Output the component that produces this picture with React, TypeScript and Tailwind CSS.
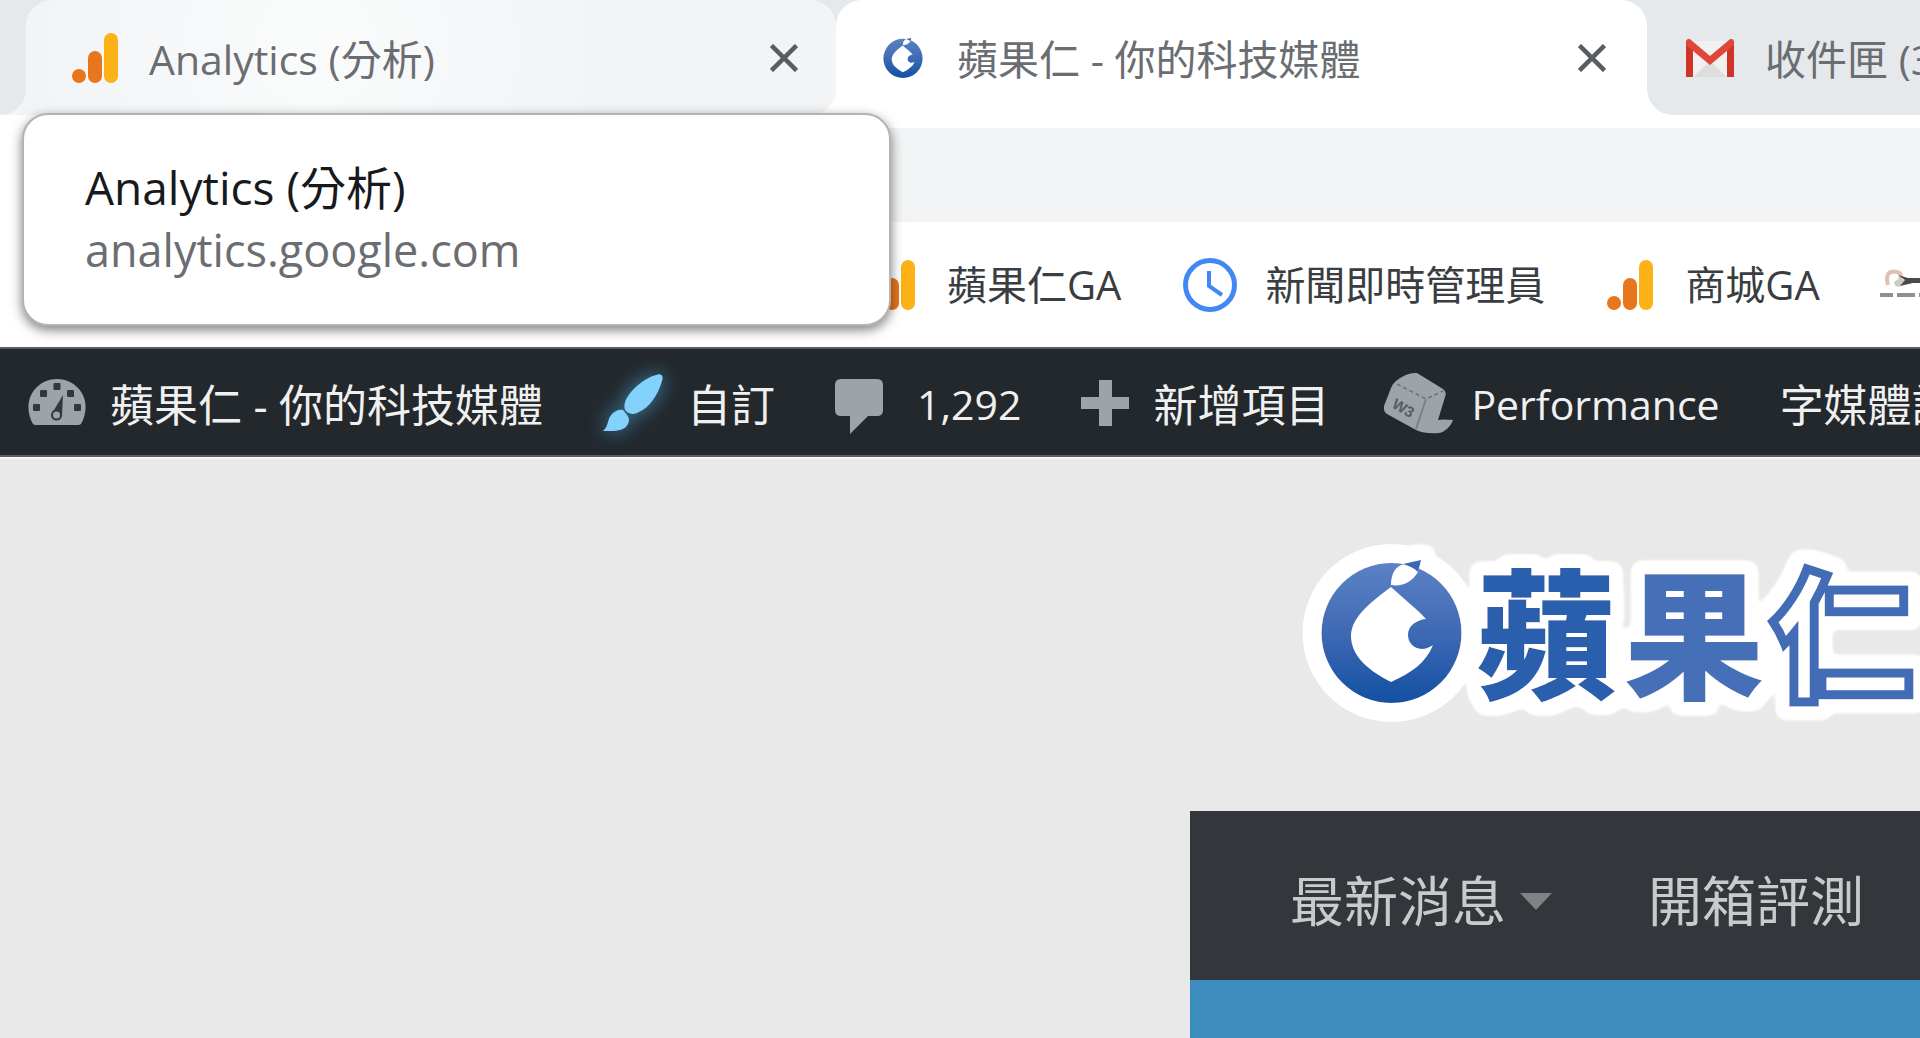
import React from 'react';

function AnalyticsIcon() {
  return (
    <svg className="h-[50px] w-[46px] shrink-0" viewBox="0 0 46 50" aria-hidden="true">
      <circle cx="7" cy="43" r="7" fill="#e8761c" />
      <rect x="16" y="18" width="14" height="32" rx="7" fill="#e8761c" />
      <rect x="32" y="0" width="14" height="50" rx="7" fill="#fcb116" />
    </svg>
  );
}

function CloseButton({ label }: { label: string }) {
  return (
    <button type="button" aria-label={label} className="shrink-0">
      <svg className="h-[28px] w-[28px]" viewBox="0 0 28 28" fill="none" stroke="#5a5d60" strokeWidth="4.5" aria-hidden="true">
        <path d="M1.5 1.5 26.5 26.5M26.5 1.5 1.5 26.5" />
      </svg>
    </button>
  );
}

function SeedMark() {
  return (
    <>
      <circle cx="101.5" cy="103" r="70" fill="url(#seed)" />
      <path
        d="M101 57C114 69 126 78 136 89C126 90 118 96 118 105C118 116 130 124 143 115C136 133 121 143 101 152C81 142 61 127 61 106C61 86 85 69 101 57Z"
        fill="#fff"
      />
      <path d="M101 55C101 43 106 36 114 34L132 28L128 42C122 52 112 57 101 55Z" fill="#fff" />
      <path d="M113 34L131 30L128 42C124 38 119 36 113 34Z" fill="#3a68b4" />
    </>
  );
}

function SeedIcon() {
  return (
    <svg className="h-[40px] w-[40px] shrink-0" viewBox="30 30 143 143" aria-hidden="true">
      <defs>
        <linearGradient id="seed" x1="0" y1="0" x2="0" y2="1">
          <stop offset="0" stopColor="#5b82c6" />
          <stop offset="0.5" stopColor="#3f69b3" />
          <stop offset="1" stopColor="#1250a3" />
        </linearGradient>
      </defs>
      <SeedMark />
    </svg>
  );
}

function GmailIcon() {
  return (
    <svg className="h-[38px] w-[48px] shrink-0" viewBox="0 0 48 38" aria-hidden="true">
      <path d="M4 2h40v36H4z" fill="#f1f1f1" />
      <path d="M7 38 24 22 41 38z" fill="#dedede" />
      <path d="M0 3 7 7v31H0zM48 3 41 7v31h7z" fill="#cf3429" />
      <path d="M0 3C0 0 3-1 5 1L24 17 43 1c2-2 5-1 5 2V6L24 26 0 6z" fill="#e0463a" />
    </svg>
  );
}

function ClockIcon() {
  return (
    <svg className="h-[54px] w-[54px] shrink-0" viewBox="0 0 54 54" fill="none" stroke="#4288f5" strokeWidth="5" aria-hidden="true">
      <circle cx="27" cy="27" r="24.5" />
      <path d="M26 13v15l13 9" strokeWidth="4" />
    </svg>
  );
}

function BirdIcon() {
  return (
    <svg className="h-[54px] w-[54px] shrink-0" viewBox="0 0 54 54" aria-hidden="true">
      <path d="M8 27C5 17 9 12 17 14C22 15 21 19 20 22" fill="none" stroke="#dfbfb2" strokeWidth="4" />
      <path d="M14 24C21 18 29 22 22 27C19 30 14 29 14 24Z" fill="#c9cccb" />
      <path d="M18 17 28 20 54 20V25H33L20 28L25 22Z" fill="#4a4a4a" />
      <path d="M0 37h54" stroke="#8f8f8f" strokeWidth="4" strokeDasharray="13 4 18 4" />
    </svg>
  );
}

function GaugeIcon() {
  return (
    <svg className="h-[48px] w-[58px] shrink-0" viewBox="0 0 58 48" aria-hidden="true">
      <path d="M5 45C-2 33-1 18 8 9C19-3 39-3 50 9C59 18 60 33 53 45Q52 46 50 46H8Q6 46 5 45Z" fill="#9ea3a8" />
      <g fill="#33383d">
        <rect x="5" y="25" width="7" height="7" rx="1" />
        <rect x="12" y="11" width="7" height="7" rx="1" />
        <rect x="25.500" y="4" width="7" height="7" rx="1" />
        <rect x="39" y="11" width="7" height="7" rx="1" />
        <rect x="46" y="25" width="7" height="7" rx="1" />
        <path d="M35 16 34 37C33 43 24 43 23 37C23 34 24 32 26 31Z" />
      </g>
      <circle cx="28.500" cy="36" r="3.500" fill="#9ea3a8" />
    </svg>
  );
}

function BrushIcon() {
  return (
    <svg
      className="h-[58px] w-[60px] shrink-0 overflow-visible drop-shadow-[0_0_10px_#3f86ad]"
      viewBox="0 0 60 58"
      fill="#82d2fc"
      aria-hidden="true"
    >
      <path d="M53 1C58-1 61 2 59 7C55 21 46 34 36 38C31 41 27 40 24 38C21 36 21 32 22 28C26 17 41 4 53 1Z" />
      <path d="M20 36C24 41 28 44 25 50C22 56 15 57 8 57H0C6 52 4 45 9 40C12 37 16 35 20 36Z" />
    </svg>
  );
}

function CommentIcon() {
  return (
    <svg className="mt-[6px] h-[55px] w-[48px] shrink-0" viewBox="0 0 48 55" fill="#9ea3a8" aria-hidden="true">
      <path d="M6 0H42Q48 0 48 6V31Q48 37 42 37H33L15 55V37H6Q0 37 0 31V6Q0 0 6 0Z" />
    </svg>
  );
}

function PlusIcon() {
  return (
    <svg className="h-[46px] w-[48px] shrink-0" viewBox="0 0 48 46" fill="#9ea3a8" aria-hidden="true">
      <path d="M18 0H31V17H48V29H31V46H18V29H0V17H18Z" />
    </svg>
  );
}

function CubeIcon() {
  return (
    <svg className="h-[62px] w-[70px] shrink-0" viewBox="0 0 70 62" aria-hidden="true">
      <path
        d="M13 9Q24 0 34 1L60 17Q64 20 62 25L55 48Q60 47 70 48C68 54 62 60 56 61Q42 62 33 58L4 42Q0 39 1 34L8 16Q9 12 13 9Z"
        fill="#9ea3a8"
      />
      <path d="M14 12 43 27 60 19" fill="none" stroke="#6b7176" strokeWidth="1.500" strokeDasharray="4 3" />
      <path d="M43 27 33 57" fill="none" stroke="#7b8186" strokeWidth="2" />
      <text
        transform="translate(8 35) rotate(30)"
        fontFamily="Liberation Sans, sans-serif"
        fontSize="15"
        fontWeight="700"
        fill="#575d62"
      >
        W3
      </text>
    </svg>
  );
}

function SiteLogo() {
  return (
    <svg className="h-[200px] w-[650px] shrink-0" viewBox="0 0 650 200" role="img" aria-label="蘋果仁">
      <defs>
        <filter id="halo" x="-5%" y="-20%" width="110%" height="140%">
          <feMorphology in="SourceAlpha" operator="dilate" radius="9" result="wide" />
          <feGaussianBlur in="wide" stdDeviation="5" result="soft" />
          <feComponentTransfer in="soft" result="edge">
            <feFuncR type="linear" slope="0" intercept="1" />
            <feFuncG type="linear" slope="0" intercept="1" />
            <feFuncB type="linear" slope="0" intercept="1" />
            <feFuncA type="linear" slope="7" intercept="-0.5" />
          </feComponentTransfer>
          <feMerge>
            <feMergeNode in="edge" />
            <feMergeNode in="SourceGraphic" />
          </feMerge>
        </filter>
      </defs>
      <circle cx="101.5" cy="103" r="89" fill="#fff" />
      <g filter="url(#halo)">
        <SeedMark />
        <g fontFamily="'Noto Sans CJK TC', sans-serif" fontSize="140" fontWeight="900">
          <text x="186" y="158" fill="#2b5eae">
            蘋
          </text>
          <text x="334" y="158" fill="#4470b8">
            果
          </text>
          <text x="482" y="158" fill="#fff" stroke="#426db6" strokeWidth="9">
            仁
          </text>
        </g>
      </g>
    </svg>
  );
}

function TabStrip() {
  return (
    <div className="flex h-[115px] bg-[#e5e9ec]">
      <div className="w-[26px] shrink-0 bg-[#f3f4f6]">
        <div className="h-full rounded-br-[26px] bg-[#e5e9ec]" />
      </div>
      <div className="w-[810px] shrink-0 bg-[linear-gradient(#e5e9ec_50%,#ffffff_50%)]">
        <div className="flex h-full items-center rounded-[26px] rounded-bl-none bg-[#f3f4f6] bg-[radial-gradient(circle_at_290px_50px,#fafbfb,#f3f4f6_280px)] pr-[38px] pl-[46px]">
          <AnalyticsIcon />
          <span className="ml-[31px] flex-1 truncate pt-[4px] text-[41px] text-[#6a6d71]">Analytics (分析)</span>
          <CloseButton label="關閉 Analytics" />
        </div>
      </div>
      <div className="flex w-[811px] shrink-0 items-center rounded-t-[26px] bg-white pr-[41px] pl-[47px]">
        <SeedIcon />
        <span className="ml-[34px] flex-1 truncate pt-[4px] text-[41px] text-[#6a6d71]">蘋果仁 - 你的科技媒體</span>
        <CloseButton label="關閉蘋果仁" />
      </div>
      <div className="min-w-0 flex-1 bg-white">
        <div className="flex h-full items-center overflow-hidden rounded-bl-[26px] bg-[#e5e9ec] pl-[39px]">
          <GmailIcon />
          <span className="ml-[31px] pt-[4px] text-[41px] whitespace-nowrap text-[#6a6d71]">收件匣 (3)</span>
        </div>
      </div>
    </div>
  );
}

function HoverCard() {
  return (
    <div
      role="tooltip"
      className="absolute top-[113px] left-[22px] h-[213px] w-[869px] rounded-[26px] border-2 border-[#b4b4b4] bg-white px-[61px] pt-[39px] shadow-[0_4px_12px_rgba(0,0,0,0.5)]"
    >
      <p className="text-[46px] leading-[66px] text-[#17191c]">Analytics (分析)</p>
      <p className="text-[45px] leading-[60px] text-[#6a6d71]">analytics.google.com</p>
    </div>
  );
}

function Bookmarks() {
  return (
    <nav
      aria-label="書籤"
      className="flex h-[125px] items-center overflow-hidden bg-white pl-[869px] text-[40px] whitespace-nowrap text-[#3a3d41]"
    >
      <a href="#apple-ga" className="flex items-center gap-[32px]">
        <AnalyticsIcon />
        蘋果仁GA
      </a>
      <a href="#news" className="ml-[62px] flex items-center gap-[28px]">
        <ClockIcon />
        新聞即時管理員
      </a>
      <a href="#shop-ga" className="ml-[62px] flex items-center gap-[32px]">
        <AnalyticsIcon />
        商城GA
      </a>
      <a href="#bird" aria-label="書籤" className="ml-[60px]">
        <BirdIcon />
      </a>
    </nav>
  );
}

function AdminBar() {
  return (
    <nav
      aria-label="管理列"
      className="flex h-[110px] items-center overflow-hidden border-y-2 border-[#5b5f63] bg-[#23282d] pt-[2px] pl-[28px] text-[44px] whitespace-nowrap text-[#f0f0f0]"
    >
      <a href="#site" className="flex items-center gap-[24px]">
        <GaugeIcon />
        <span className="pt-[4px]">蘋果仁 - 你的科技媒體</span>
      </a>
      <a href="#customize" className="ml-[60px] flex items-center gap-[24px]">
        <BrushIcon />
        <span className="pt-[4px]">自訂</span>
      </a>
      <a href="#comments" className="ml-[60px] flex items-center gap-[34px]">
        <CommentIcon />
        <span className="pt-[4px] text-[41px] font-medium">1,292</span>
      </a>
      <a href="#new" className="ml-[60px] flex items-center gap-[24px]">
        <PlusIcon />
        <span className="pt-[4px]">新增項目</span>
      </a>
      <a href="#performance" className="ml-[54px] flex items-center gap-[18px]">
        <CubeIcon />
        <span className="pt-[4px] text-[41px] font-medium">Performance</span>
      </a>
      <a href="#media" className="ml-[60px] pt-[4px]">
        字媒體設定
      </a>
    </nav>
  );
}

function SiteNav() {
  return (
    <nav
      aria-label="主選單"
      className="flex h-[169px] items-center gap-[96px] overflow-hidden bg-[#33363b] pt-[12px] pl-[100px] text-[54px] whitespace-nowrap text-[#c9cacc]"
    >
      <a href="#latest" className="flex items-center gap-[14px]">
        最新消息
        <svg className="h-[17px] w-[32px]" viewBox="0 0 32 17" fill="#818285" aria-hidden="true">
          <path d="M0 0H32L16 17Z" />
        </svg>
      </a>
      <a href="#reviews">開箱評測</a>
    </nav>
  );
}

export default function App() {
  return (
    <div className="relative flex min-h-screen flex-col overflow-hidden bg-[#e9e9e9] font-['Open_Sans','Noto_Sans_CJK_TC',sans-serif]">
      <TabStrip />
      <div className="bg-white pt-[13px] pl-[60px]">
        <div className="h-[94px] rounded-l-full bg-[#f1f3f4]" />
      </div>
      <Bookmarks />
      <AdminBar />
      <HoverCard />
      <header className="flex h-[354px] overflow-hidden border-t-2 border-[#f7f7f7] pt-[71px] pl-[1290px]">
        <SiteLogo />
      </header>
      <div className="ml-[1190px] flex flex-1 flex-col">
        <SiteNav />
        <div className="flex-1 bg-[#3c8dbe]" />
      </div>
    </div>
  );
}
